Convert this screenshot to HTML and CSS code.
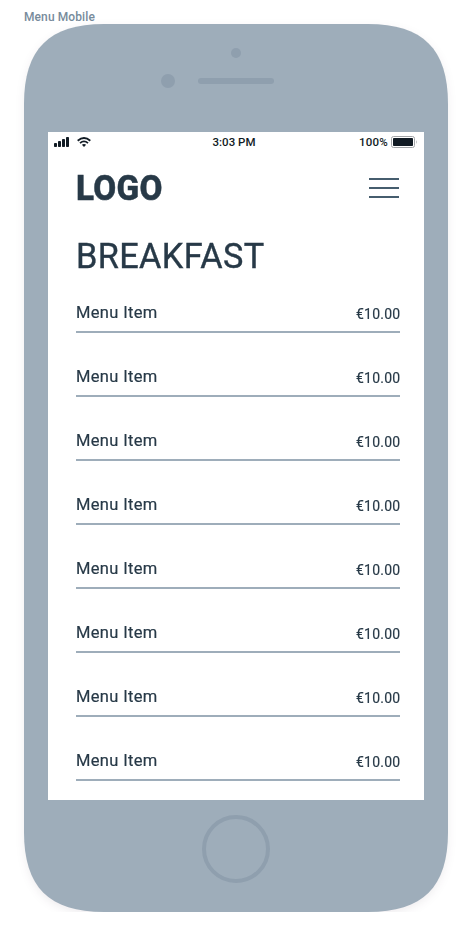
FILE: index.html
```html
<!DOCTYPE html>
<html lang="en">
<head>
<meta charset="utf-8">
<title>Menu Mobile</title>
<link rel="stylesheet" href="styles.css">
</head>
<body>
<div class="label"><span>Menu Mobile</span></div>
<main class="phone">
  <svg class="shell" width="424" height="888" viewBox="0 0 424 888" fill="#9eadba"><path d="M80 0H344C399 0 424 25 424 80V808C424 863 399 888 344 888H80C25 888 0 863 0 808V80C0 25 25 0 80 0Z"/></svg>
  <div class="top">
    <i class="camera"></i>
    <div class="speaker-row"><i class="sensor"></i><i class="speaker"></i></div>
  </div>
  <section class="screen">
    <div class="status">
      <div class="signals">
        <svg width="16" height="10" viewBox="0 0 16 10" fill="#111b24"><rect y="6" width="3" height="4" rx=".8"/><rect x="4" y="4" width="3" height="6" rx=".8"/><rect x="8" y="2" width="3" height="8" rx=".8"/><rect x="12" width="3" height="10" rx=".8"/></svg>
        <svg class="wifi" width="14" height="10" viewBox="0 0 14 10" fill="none" stroke="#111b24" stroke-width="1.8"><path d="M.7 3.7Q7-1.8 13.3 3.7M3 6.1Q7 2.7 11 6.1"/><path d="M4.9 7.8Q7 6.4 9.1 7.8L7 10z" fill="#111b24" stroke="none"/></svg>
      </div>
      <span class="time">3:03 PM</span>
      <div class="power">
        <span>100%</span>
        <svg width="27" height="12" viewBox="0 0 27 12"><rect x=".5" y=".5" width="23" height="11" rx="2" fill="none" stroke="#a2a5a8"/><rect x="2" y="2" width="20" height="8" rx=".8" fill="#111b24"/><path d="M25 4Q26.5 6 25 8z" fill="#a2a5a8"/></svg>
      </div>
    </div>
    <header class="header"><span class="logo">LOGO</span><div class="burger"><i></i><i></i><i></i></div></header>
    <h1><span>BREAKFAST</span></h1>
    <ul class="menu">
      <li><span class="name">Menu Item</span><span class="price">€10.00</span></li>
      <li><span class="name">Menu Item</span><span class="price">€10.00</span></li>
      <li><span class="name">Menu Item</span><span class="price">€10.00</span></li>
      <li><span class="name">Menu Item</span><span class="price">€10.00</span></li>
      <li><span class="name">Menu Item</span><span class="price">€10.00</span></li>
      <li><span class="name">Menu Item</span><span class="price">€10.00</span></li>
      <li><span class="name">Menu Item</span><span class="price">€10.00</span></li>
      <li><span class="name">Menu Item</span><span class="price">€10.00</span></li>
    </ul>
  </section>
  <div class="home"></div>
</main>
</body>
</html>
```
FILE: styles.css
```css
* { box-sizing: border-box; }
body { margin: 0; background: #fff; color: #273947; font-family: Roboto, "Liberation Sans", sans-serif; }
.label { height: 24px; padding: 9px 0 0 24px; font-size: 12px; line-height: 16px; font-weight: 500; color: #778b9b; letter-spacing: .1px; }
.phone { position: relative; z-index: 0; width: 424px; height: 888px; margin: 0 24px; padding: 0 24px; }
.shell { position: absolute; z-index: -1; top: 0; left: 0; overflow: visible; filter: drop-shadow(0 3px 4px rgba(50, 30, 50, .08)); }
.top { height: 108px; padding-top: 24px; }
.camera { display: block; width: 10px; height: 10px; margin: 0 auto; border-radius: 50%; background: #8f9fae; }
.speaker-row { display: flex; align-items: center; height: 14px; margin: 16px 0 0 113px; }
.sensor { width: 14px; height: 14px; border-radius: 50%; background: #8f9fae; }
.speaker { width: 76px; height: 6px; margin-left: 23px; border-radius: 3px; background: #8f9fae; }
.screen { height: 668px; background: #fff; overflow: hidden; }
.status { display: grid; grid-template-columns: 1fr auto 1fr; align-items: center; height: 20px; padding: 0 6px; color: #111b24; font-size: 11.5px; font-weight: 500; line-height: 20px; }
.signals { display: flex; align-items: center; }
.wifi { margin-left: 7px; }
.time { margin-right: 4px; }
.power { display: flex; justify-content: flex-end; align-items: center; gap: 3px; }
.power span { letter-spacing: .2px; }
.header { display: flex; justify-content: space-between; height: 70px; padding: 25px 25px 0 28px; }
.logo { height: 40px; font-size: 35px; line-height: 40px; font-weight: 800; letter-spacing: .3px; transform: scaleX(.95); transform-origin: left; margin-top: -8px; -webkit-text-stroke: .5px #273947; }
.burger { display: flex; flex-direction: column; gap: 7px; width: 30px; padding-top: 1px; }
.burger i { height: 2px; background: #465d6e; }
h1 { height: 62px; margin: 0; padding: 13px 0 0 28px; font-size: 35.5px; line-height: 42px; font-weight: 400; -webkit-text-stroke: .4px #273947; }
h1 span { display: inline-block; letter-spacing: .4px; transform: scaleX(.965); transform-origin: left; }
.menu { margin: 0 24px 0 28px; padding: 0; list-style: none; }
.menu li { display: flex; justify-content: space-between; height: 49px; margin-bottom: 15px; border-bottom: 2px solid #9eadba; }
.name, .price { height: 20px; line-height: 20px; }
.name { margin-top: 18px; font-size: 17.3px; letter-spacing: .35px; transform: scaleX(.955); transform-origin: left; -webkit-text-stroke: .2px #273947; }
.price { margin-top: 20px; font-size: 15.5px; letter-spacing: .3px; transform: scaleX(.9); transform-origin: right; -webkit-text-stroke: .2px #273947; }
.home { width: 68px; height: 68px; margin: 15px auto 0; border: 4px solid #8f9fae; border-radius: 50%; }
```
